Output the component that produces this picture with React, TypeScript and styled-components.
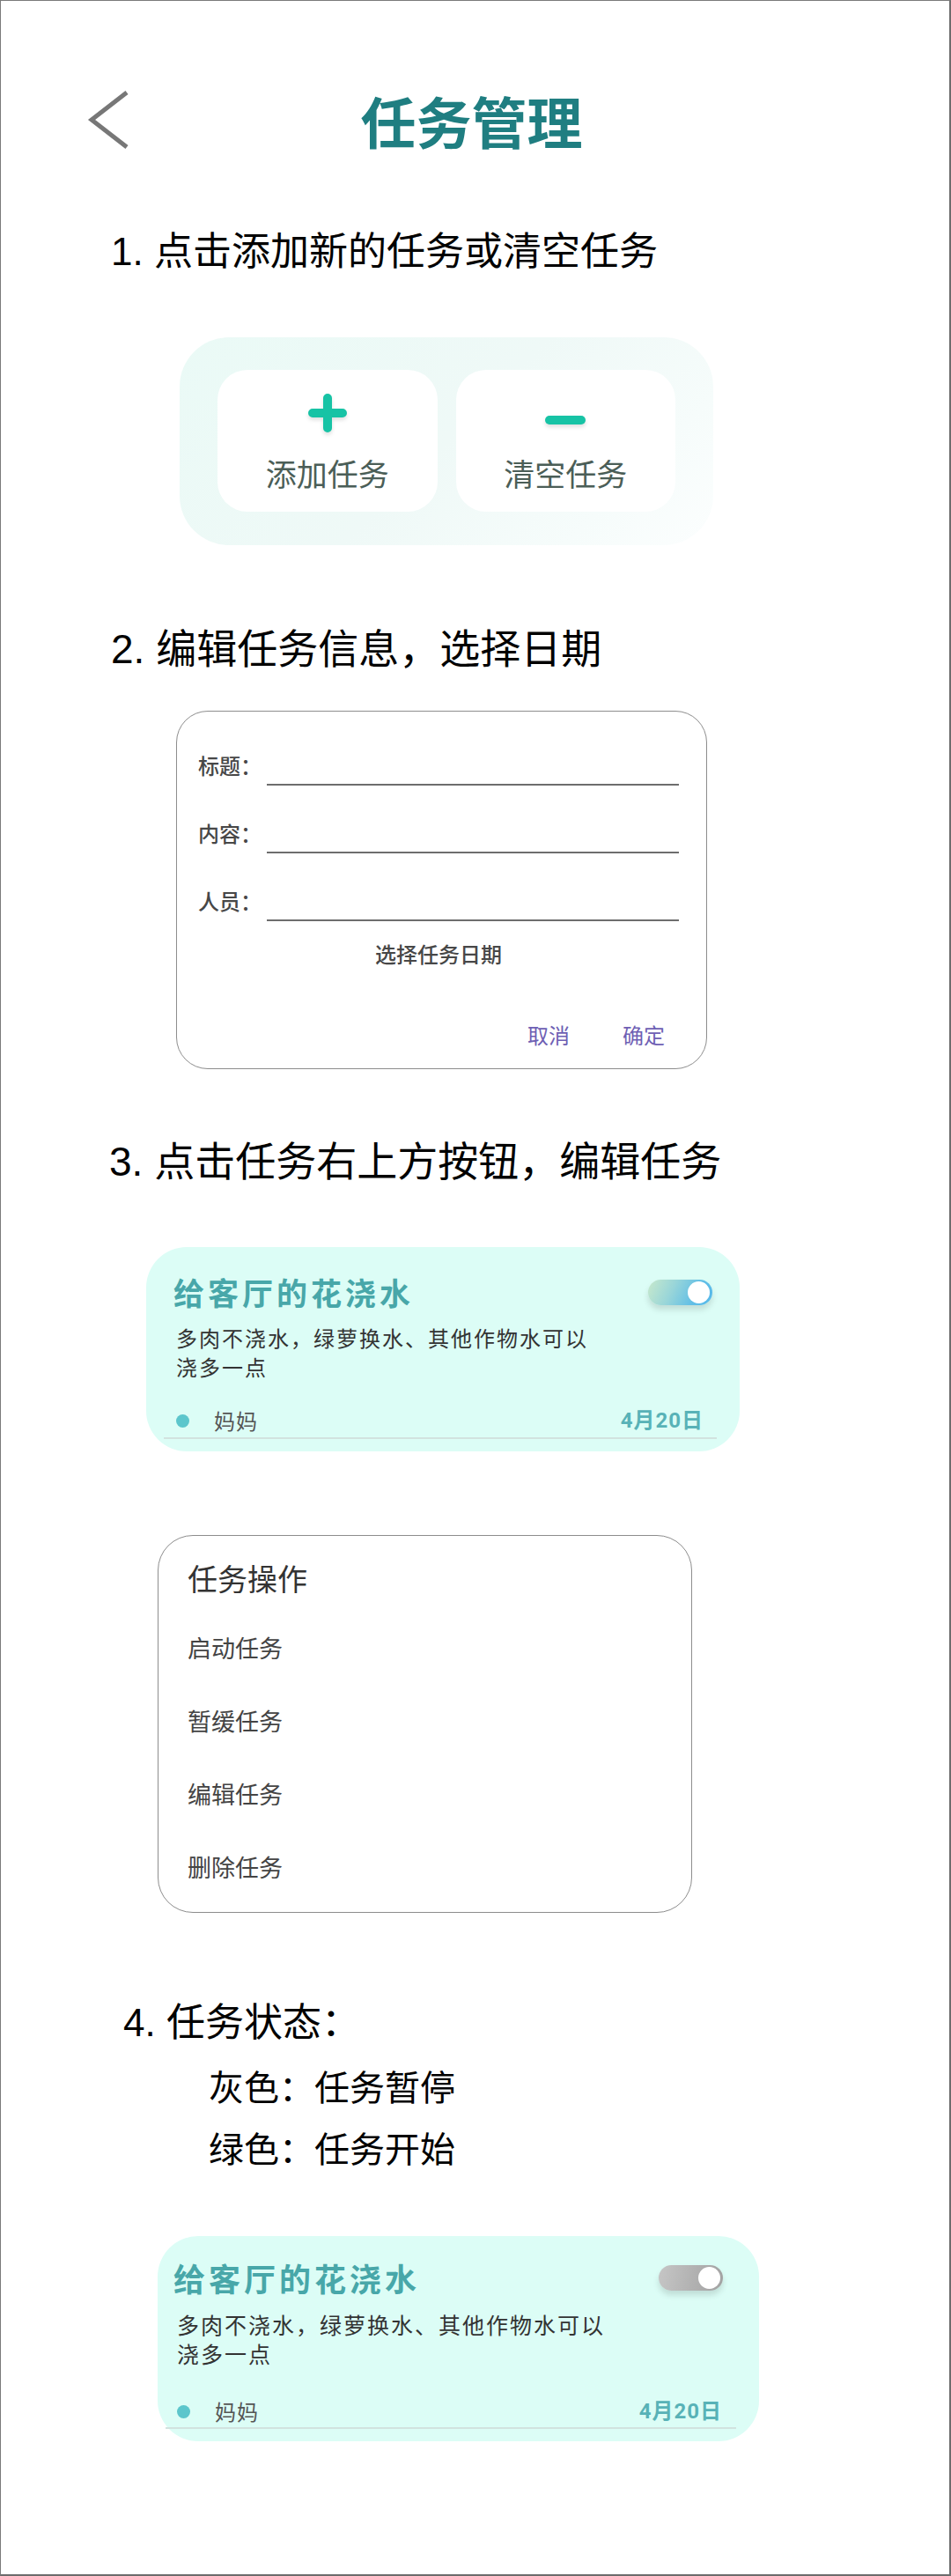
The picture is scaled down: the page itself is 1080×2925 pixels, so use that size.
import React from "react";
import styled, { createGlobalStyle } from "styled-components";

const GlobalStyle = createGlobalStyle`
  html, body { margin: 0; padding: 0; background: #ffffff; }
  body { font-family: "Liberation Sans", "Noto Sans CJK SC", sans-serif; }
  * { box-sizing: border-box; }
`;

const CJK = `"Noto Sans CJK SC", "Noto Sans", sans-serif`;

const Page = styled.div`
  width: 1080px;
  height: 2925px;
  border-top: 1px solid #7a7a7a;
  border-left: 1px solid #7a7a7a;
  border-right: 2px solid #6c6c6c;
  border-bottom: 2px solid #6c6c6c;
  background: #ffffff;
  overflow: hidden;
  display: flex;
  flex-direction: column;
`;

const Header = styled.header`
  margin-top: 99px;
  height: 72px;
  display: grid;
  grid-template-columns: 1fr auto 1fr;
  align-items: center;
`;

const BackButton = styled.div`
  padding-left: 97px;
  display: flex;
  align-items: center;
`;

const PageTitle = styled.h1`
  margin: 0;
  font-family: ${CJK};
  font-size: 63px;
  line-height: 72px;
  font-weight: 700;
  color: #1f7e81;
  padding-right: 8px;
`;

const StepTitle = styled.h2<{ $size: number; $indent: number; $top: number }>`
  margin: ${(p) => p.$top}px 0 0 0;
  padding-left: ${(p) => p.$indent}px;
  font-family: "Liberation Sans", "Noto Sans CJK SC", sans-serif;
  font-size: ${(p) => p.$size}px;
  line-height: ${(p) => p.$size + 8}px;
  font-weight: 400;
  color: #000000;
`;

const StatusLine = styled.p`
  margin: 0;
  padding-left: 236px;
  font-family: ${CJK};
  font-size: 40px;
  line-height: 70px;
  color: #000000;
`;

const StatusBlock = styled.div`
  margin-top: 10px;
`;

/* ---------- Section 1: action panel ---------- */

const ActionPanel = styled.div`
  margin: 71px 0 0 203px;
  width: 606px;
  height: 236px;
  padding: 37px 43px 38px;
  border-radius: 56px;
  background: linear-gradient(135deg, #eafaf6 0%, #eff9f7 50%, #f6fcfb 80%, #fcfefe 100%);
  display: flex;
  gap: 21px;
`;

const ActionButton = styled.div`
  flex: 1;
  border-radius: 34px;
  background: #ffffff;
  display: flex;
  flex-direction: column;
  align-items: center;
  padding-top: 27px;
`;

const ActionIcon = styled.svg`
  display: block;
  filter: drop-shadow(0 3px 2px rgba(0, 0, 0, 0.12));
`;

const ActionLabel = styled.span`
  margin-top: 26px;
  font-family: ${CJK};
  font-size: 35px;
  line-height: 40px;
  color: #4b5e57;
`;

/* ---------- Section 2: edit dialog ---------- */

const Dialog = styled.div`
  margin: 43px 0 0 199px;
  width: 603px;
  height: 407px;
  border: 1px solid #8d8d8d;
  border-radius: 36px;
  padding: 44px 31px 0 24px;
  display: flex;
  flex-direction: column;
`;

const FormRows = styled.div`
  display: flex;
  flex-direction: column;
  gap: 37px;
`;

const FormRow = styled.div`
  display: flex;
  align-items: flex-end;
  height: 40px;
`;

const FormLabel = styled.span`
  width: 78px;
  margin-bottom: 11px;
  font-family: ${CJK};
  font-size: 24px;
  line-height: 24px;
  font-weight: 500;
  color: #474747;
`;

const FormField = styled.div`
  flex: 1;
  height: 100%;
  border-bottom: 2px solid #6d6d6d;
`;

const DatePrompt = styled.div`
  margin-top: 25px;
  text-align: center;
  font-family: ${CJK};
  font-size: 24px;
  line-height: 24px;
  font-weight: 500;
  color: #474747;
`;

const DialogActions = styled.div`
  margin-top: 68px;
  padding-right: 16px;
  display: flex;
  justify-content: flex-end;
  gap: 60px;
`;

const DialogButton = styled.span`
  font-family: ${CJK};
  font-size: 24px;
  line-height: 24px;
  color: #6e5fb4;
`;

/* ---------- Task card ---------- */

type CardSpec = {
  top: number;
  left: number;
  width: number;
  height: number;
  padTop: number;
  padLeft: number;
  padRight: number;
  titleSize: number;
  descSize: number;
  descGap: number;
  descIndent: number;
  footGap: number;
  lineLeft: number;
  lineRight: number;
  footPadLeft: number;
  footPadRight: number;
  footPadBottom: number;
};

const Card = styled.div<{ $s: CardSpec }>`
  margin: ${(p) => p.$s.top}px 0 0 ${(p) => p.$s.left - 1}px;
  width: ${(p) => p.$s.width}px;
  height: ${(p) => p.$s.height}px;
  padding: ${(p) => p.$s.padTop}px ${(p) => p.$s.padRight}px 0 ${(p) => p.$s.padLeft}px;
  border-radius: 46px;
  background: #dcfdf6;
  display: flex;
  flex-direction: column;
`;

const CardHead = styled.div`
  display: flex;
  align-items: center;
  justify-content: space-between;
`;

const CardTitle = styled.div<{ $size: number }>`
  font-family: ${CJK};
  font-size: ${(p) => p.$size}px;
  line-height: 40px;
  font-weight: 700;
  letter-spacing: 4px;
  color: #48a7a9;
`;

const Switch = styled.div<{ $on: boolean }>`
  position: relative;
  flex-shrink: 0;
  width: 73px;
  height: 29px;
  border-radius: 15px;
  background: ${(p) =>
    p.$on
      ? "linear-gradient(115deg, #c8e9cc 0%, #98d5d9 38%, #62bfe6 72%, #55b8ea 100%)"
      : "linear-gradient(100deg, #c6c6c6 0%, #b3b3b3 50%, #a2a2a2 100%)"};
  box-shadow: 0 5px 7px rgba(0, 0, 0, 0.13);
`;

const Knob = styled.span`
  position: absolute;
  top: 2px;
  right: 3px;
  width: 25px;
  height: 25px;
  border-radius: 50%;
  background: #ffffff;
`;

const CardDesc = styled.p<{ $size: number; $gap: number; $indent: number }>`
  margin: ${(p) => p.$gap}px 0 0 0;
  padding-left: ${(p) => p.$indent}px;
  max-width: ${(p) => p.$indent + 18 * (p.$size + 2) + 12}px;
  font-family: ${CJK};
  font-size: ${(p) => p.$size}px;
  line-height: 33px;
  letter-spacing: 2px;
  color: #333333;
`;

const CardFoot = styled.div<{ $s: CardSpec }>`
  margin: ${(p) => p.$s.footGap}px ${(p) => -(p.$s.padRight - p.$s.lineRight)}px 0
    ${(p) => -(p.$s.padLeft - p.$s.lineLeft)}px;
  padding: 0 ${(p) => p.$s.footPadRight}px ${(p) => p.$s.footPadBottom}px ${(p) => p.$s.footPadLeft}px;
  border-bottom: 2px solid #d2e3df;
  display: flex;
  align-items: center;
`;

const Dot = styled.span`
  width: 15px;
  height: 15px;
  border-radius: 50%;
  background: #5cc6cc;
  flex-shrink: 0;
`;

const Owner = styled.span`
  margin-left: 28px;
  font-family: ${CJK};
  font-size: 24px;
  line-height: 28px;
  letter-spacing: 1px;
  color: #555555;
`;

const DueDate = styled.span`
  margin-left: auto;
  font-family: "Roboto", "Noto Sans CJK SC", sans-serif;
  font-size: 24px;
  line-height: 28px;
  font-weight: 700;
  letter-spacing: 1px;
  color: #58b2b7;
`;

/* ---------- Menu ---------- */

const Menu = styled.div`
  margin: 95px 0 0 178px;
  width: 607px;
  height: 429px;
  border: 1px solid #8d8d8d;
  border-radius: 40px;
  padding: 28px 0 0 33px;
  display: flex;
  flex-direction: column;
`;

const MenuTitle = styled.div`
  font-family: ${CJK};
  font-size: 34px;
  line-height: 40px;
  color: #333333;
`;

const MenuList = styled.div`
  margin-top: 17px;
  display: flex;
  flex-direction: column;
`;

const MenuItem = styled.div`
  font-family: ${CJK};
  font-size: 27px;
  line-height: 83px;
  color: #444444;
`;

const cardA: CardSpec = {
  top: 70,
  left: 166,
  width: 674,
  height: 232,
  padTop: 31,
  padLeft: 31,
  padRight: 31,
  titleSize: 35,
  descSize: 24,
  descGap: 15,
  descIndent: 3,
  footGap: 31,
  lineLeft: 20,
  lineRight: 26,
  footPadLeft: 14,
  footPadRight: 15,
  footPadBottom: 5,
};

const cardB: CardSpec = {
  top: 66,
  left: 179,
  width: 683,
  height: 233,
  padTop: 27,
  padLeft: 18,
  padRight: 41,
  titleSize: 36,
  descSize: 25,
  descGap: 17,
  descIndent: 4,
  footGap: 35,
  lineLeft: 9,
  lineRight: 26,
  footPadLeft: 13,
  footPadRight: 16,
  footPadBottom: 4,
};

function TaskCard({ spec, on }: { spec: CardSpec; on: boolean }) {
  return (
    <Card $s={spec}>
      <CardHead>
        <CardTitle $size={spec.titleSize}>给客厅的花浇水</CardTitle>
        <Switch $on={on}>
          <Knob />
        </Switch>
      </CardHead>
      <CardDesc $size={spec.descSize} $gap={spec.descGap} $indent={spec.descIndent}>
        多肉不浇水，绿萝换水、其他作物水可以浇多一点
      </CardDesc>
      <CardFoot $s={spec}>
        <Dot />
        <Owner>妈妈</Owner>
        <DueDate>4月20日</DueDate>
      </CardFoot>
    </Card>
  );
}

export default function App() {
  return (
    <>
      <GlobalStyle />
      <Page>
        <Header>
          <BackButton>
            <svg width="52" height="72" viewBox="0 0 52 72">
              <polyline
                points="46,5 6,36 46,67"
                fill="none"
                stroke="#777777"
                strokeWidth="5"
                strokeLinejoin="miter"
              />
            </svg>
          </BackButton>
          <PageTitle>任务管理</PageTitle>
          <div />
        </Header>

        <StepTitle $size={44} $indent={125} $top={88}>
          1. 点击添加新的任务或清空任务
        </StepTitle>

        <ActionPanel>
          <ActionButton>
            <ActionIcon width="44" height="44" viewBox="0 0 44 44">
              <path d="M22 5 V39 M5 22 H39" stroke="#17c3a5" strokeWidth="10" strokeLinecap="round" fill="none" />
            </ActionIcon>
            <ActionLabel>添加任务</ActionLabel>
          </ActionButton>
          <ActionButton>
            <ActionIcon width="48" height="44" viewBox="0 0 48 44">
              <path d="M6 30 H42" stroke="#17c3a5" strokeWidth="10" strokeLinecap="round" fill="none" />
            </ActionIcon>
            <ActionLabel>清空任务</ActionLabel>
          </ActionButton>
        </ActionPanel>

        <StepTitle $size={46} $indent={125} $top={91}>
          2. 编辑任务信息，选择日期
        </StepTitle>

        <Dialog>
          <FormRows>
            <FormRow>
              <FormLabel>标题：</FormLabel>
              <FormField />
            </FormRow>
            <FormRow>
              <FormLabel>内容：</FormLabel>
              <FormField />
            </FormRow>
            <FormRow>
              <FormLabel>人员：</FormLabel>
              <FormField />
            </FormRow>
          </FormRows>
          <DatePrompt>选择任务日期</DatePrompt>
          <DialogActions>
            <DialogButton>取消</DialogButton>
            <DialogButton>确定</DialogButton>
          </DialogActions>
        </Dialog>

        <StepTitle $size={46} $indent={123} $top={78}>
          3. 点击任务右上方按钮，编辑任务
        </StepTitle>

        <TaskCard spec={cardA} on={true} />

        <Menu>
          <MenuTitle>任务操作</MenuTitle>
          <MenuList>
            <MenuItem>启动任务</MenuItem>
            <MenuItem>暂缓任务</MenuItem>
            <MenuItem>编辑任务</MenuItem>
            <MenuItem>删除任务</MenuItem>
          </MenuList>
        </Menu>

        <StepTitle $size={44} $indent={139} $top={99}>
          4. 任务状态：
        </StepTitle>
        <StatusBlock>
          <StatusLine>灰色：任务暂停</StatusLine>
          <StatusLine>绿色：任务开始</StatusLine>
        </StatusBlock>

        <TaskCard spec={cardB} on={false} />
      </Page>
    </>
  );
}
